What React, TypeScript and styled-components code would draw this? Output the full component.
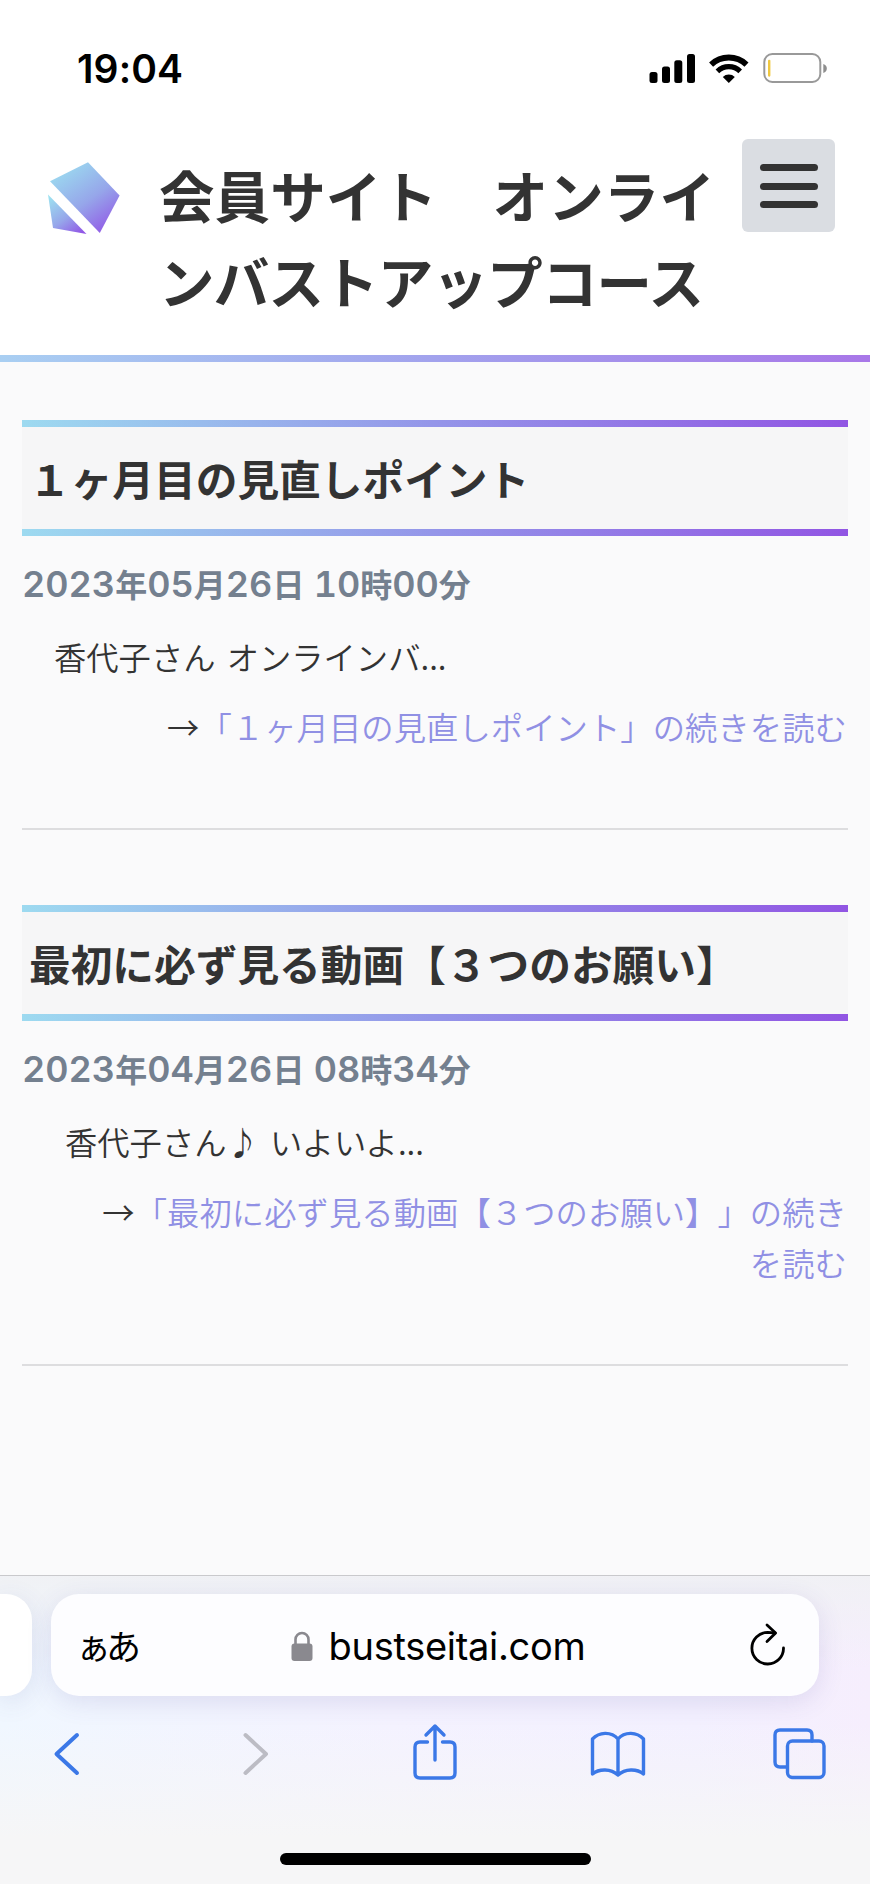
import React from "react";
import styled, { createGlobalStyle } from "styled-components";

const GlobalStyle = createGlobalStyle`
  * { box-sizing: border-box; }
  body { margin: 0; background: #fafafb; }
  h1, h2, p { margin: 0; }
`;

const jp = `"Noto Sans CJK JP", sans-serif`;
const latin = `Inter, "Noto Sans CJK JP", sans-serif`;
const rainbow = "linear-gradient(90deg, #9ddaf0 0%, #9495e9 50%, #9155e3 100%)";

const Screen = styled.div`
  width: 870px;
  height: 1884px;
  display: flex;
  flex-direction: column;
  overflow: hidden;
  background: #fafafb;
  color: #333;
  font-family: ${jp};
  text-spacing-trim: space-all;
`;

const StatusBar = styled.div`
  height: 139px;
  flex: none;
  display: flex;
  justify-content: space-between;
  align-items: flex-start;
  padding: 45px 42px 0 77px;
  background: #fff;
`;

const Clock = styled.div`
  font: 600 39px/48px ${latin};
  color: #000;
  letter-spacing: 0.1px;
`;

const SiteHeader = styled.header`
  height: 216px;
  flex: none;
  display: flex;
  align-items: flex-start;
  background: #fff;
  padding: 0 35px 0 46px;
`;

const LogoMark = styled.svg`
  flex: none;
  margin-top: 21px;
`;

const SiteTitle = styled.h1`
  flex: none;
  width: 583px;
  margin: 12px 0 0 37px;
  font: 700 55.5px/86px ${jp};
  white-space: nowrap;
`;

const TitleLine = styled.span<{ $tracking: number }>`
  display: block;
  letter-spacing: ${(p) => p.$tracking}px;
`;

const MenuButton = styled.button`
  flex: none;
  width: 93px;
  height: 93px;
  border: 0;
  border-radius: 6px;
  background: #dadde2;
  padding: 1px 0 0;
  display: flex;
  flex-direction: column;
  align-items: center;
  justify-content: center;
  gap: 11.5px;
`;

const MenuBar = styled.span`
  width: 58px;
  height: 7px;
  border-radius: 4px;
  background: #333;
`;

const HeaderRule = styled.div`
  height: 7px;
  flex: none;
  background: linear-gradient(90deg, #a9cff2 0%, #a2a2ed 50%, #a877e8 100%);
`;

const Content = styled.main`
  flex: 1;
  padding: 58px 22px 0;
`;

const Article = styled.article`
  border-bottom: 2px solid #dddddf;
  margin-bottom: 75px;
  padding-bottom: 76px;
`;

const Heading = styled.h2`
  height: 116px;
  border: solid transparent;
  border-width: 7px 0;
  border-image: ${rainbow} 1;
  border-image-width: 7px 0;
  background: #f6f6f7;
  padding-left: 7px;
  font: 700 41.7px/103px ${jp};
  white-space: nowrap;
`;

const DateLine = styled.p`
  height: 48px;
  margin-top: 23px;
  font: 700 32px/48px ${jp};
  color: #74808f;
  white-space: nowrap;
  word-spacing: 2px;
`;

const Digits = styled.span`
  font: 600 36px/48px Inter, sans-serif;
  font-feature-settings: "tnum";
`;

const Excerpt = styled.p<{ $indent: number }>`
  height: 51px;
  margin-top: 24px;
  padding-left: ${(p) => p.$indent}px;
  font: 350 32.3px/51px ${jp};
  white-space: nowrap;
  word-spacing: 4px;
`;

const More = styled.p`
  margin-top: 19px;
  padding-right: 1px;
  text-align: right;
  font: 350 32.3px/51px ${jp};
  letter-spacing: 0.08px;
`;

const MoreLink = styled.a`
  color: #9090e4;
`;

const Phrase = styled.span`
  display: inline-block;
  white-space: nowrap;
`;

const BrowserBar = styled.footer`
  height: 309px;
  flex: none;
  border-top: 1px solid #c9c9cc;
  padding-top: 18px;
  background:
    linear-gradient(180deg, rgba(240, 241, 244, 0.9) 0%, rgba(240, 241, 244, 0) 30%),
    linear-gradient(0deg, #f6f6f7 15%, rgba(246, 246, 247, 0) 52%),
    linear-gradient(90deg, #f0f7ff 0%, #f4f2ff 45%, #f3f0ff 80%, #f6eefd 100%);
`;

const TabStrip = styled.div`
  display: flex;
  gap: 19px;
  height: 102px;
`;

const PreviousTab = styled.div`
  width: 32px;
  background: #fff;
  border-radius: 0 26px 26px 0;
  box-shadow: 0 6px 26px rgba(70, 80, 150, 0.13);
`;

const AddressField = styled.div`
  width: 768px;
  display: grid;
  grid-template-columns: 190px 1fr 190px;
  align-items: center;
  padding: 0 33px 0 30px;
  background: #fdfdff;
  border-radius: 28px;
  box-shadow: 0 6px 26px rgba(70, 60, 150, 0.13);
  color: #000;
`;

const PageSettings = styled.span`
  font: 400 35px/48px ${jp};
  letter-spacing: -5px;
  margin-left: -5px;
`;

const Domain = styled.span`
  display: flex;
  align-items: center;
  justify-content: center;
  gap: 16px;
  font: 400 38px/48px ${latin};
  letter-spacing: -0.3px;
  padding: 1px 0 0 9px;
`;

const Reload = styled.svg`
  justify-self: end;
`;

const Toolbar = styled.nav`
  display: flex;
  justify-content: space-between;
  padding: 24px 41px 0;
`;

const HomeIndicator = styled.div`
  width: 311px;
  height: 12px;
  margin: 73px auto 0;
  border-radius: 6px;
  background: #000;
`;

const ToolIcon = ({ children, color = "#3b78e7" }: { children: React.ReactNode; color?: string }) => (
  <svg width="58" height="60" viewBox="0 0 58 60" fill="none" stroke={color} strokeWidth="3.4" strokeLinecap="round" strokeLinejoin="round">
    {children}
  </svg>
);

const DateText = ({ value }: { value: string }) => (
  <DateLine>
    {value.split(/([0-9]+)/).map((part, i) => (/[0-9]/.test(part) ? <Digits key={i}>{part}</Digits> : part))}
  </DateLine>
);

const posts = [
  { title: "１ヶ月目の見直しポイント", date: "2023年05月26日 10時00分", excerpt: "香代子さん オンラインバ...", indent: 32 },
  { title: "最初に必ず見る動画【３つのお願い】", date: "2023年04月26日 08時34分", excerpt: "香代子さん♪ いよいよ...", indent: 43 },
];

export default function App() {
  return (
    <Screen>
      <GlobalStyle />
      <StatusBar>
        <Clock>19:04</Clock>
        <svg width="180" height="40" viewBox="648 45 180 40">
          <rect x="649.5" y="72" width="8" height="11" rx="2.5" />
          <rect x="662" y="66.5" width="8" height="16.5" rx="2.5" />
          <rect x="674.3" y="60.3" width="8" height="22.7" rx="2.5" />
          <rect x="687" y="54" width="8" height="29" rx="2.5" />
          <g fill="none" stroke="#000">
            <path d="M711.1 64.6A25.6 25.6 0 0 1 746.5 64.6" strokeWidth="5.8" />
            <path d="M717.4 71.3A16.4 16.4 0 0 1 740.2 71.3" strokeWidth="5.2" />
          </g>
          <path d="M728.8 83L722.8 77A8.7 8.7 0 0 1 734.8 77Z" />
          <rect x="764.3" y="54" width="56" height="28" rx="8" fill="none" stroke="#999" strokeWidth="2" />
          <rect x="768" y="59.7" width="2.4" height="17" rx="1.1" fill="#f0c840" />
          <path d="M823.3 64C828 65 828 72 823.3 73Z" fill="#8e8e8e" />
        </svg>
      </StatusBar>
      <SiteHeader>
        <LogoMark width="76" height="76" viewBox="46 160 76 76">
          <defs>
            <linearGradient id="facet" x1="0.15" y1="0" x2="0.85" y2="1">
              <stop offset="0" stopColor="#9ce0f0" />
              <stop offset="0.55" stopColor="#96a6ea" />
              <stop offset="1" stopColor="#9155e6" />
            </linearGradient>
          </defs>
          <path d="M88 162.3L119.6 195.5L99.8 233L50 181.3Z" fill="url(#facet)" />
          <path d="M48 194.5L86.5 234L53 228Z" fill="url(#facet)" />
        </LogoMark>
        <SiteTitle>
          <TitleLine $tracking={0.1}>会員サイト　オンライ</TitleLine>
          <TitleLine $tracking={-0.8}>ンバストアップコース</TitleLine>
        </SiteTitle>
        <MenuButton aria-label="メニュー">
          <MenuBar />
          <MenuBar />
          <MenuBar />
        </MenuButton>
      </SiteHeader>
      <HeaderRule />
      <Content>
        {posts.map((post) => (
          <Article key={post.title}>
            <Heading>{post.title}</Heading>
            <DateText value={post.date} />
            <Excerpt $indent={post.indent}>{post.excerpt}</Excerpt>
            <More>
              →<MoreLink>「{post.title}」の続き<Phrase>を読む</Phrase></MoreLink>
            </More>
          </Article>
        ))}
      </Content>
      <BrowserBar>
        <TabStrip>
          <PreviousTab />
          <AddressField>
            <PageSettings>ぁあ</PageSettings>
            <Domain>
              <svg width="22" height="30" viewBox="0 0 22 30">
                <path d="M4.5 14V8.5a6.5 6.5 0 0 1 13 0V14" fill="none" stroke="#8a898f" strokeWidth="2.6" />
                <rect x="0.5" y="12.5" width="21" height="17.5" rx="3" fill="#8a898f" />
              </svg>
              bustseitai.com
            </Domain>
            <Reload width="36" height="44" viewBox="750 1622 36 44" fill="none" stroke="#000" strokeWidth="2.8" strokeLinecap="round" strokeLinejoin="round">
              <path d="M783.5 1647A15.8 15.8 0 1 1 767.7 1631.4L775 1632" />
              <path d="M767 1624L775.6 1632L767 1640.5" />
            </Reload>
          </AddressField>
        </TabStrip>
        <Toolbar>
          <ToolIcon>
            <path d="M36 15L15.5 34L36 53" strokeWidth="4" />
          </ToolIcon>
          <ToolIcon color="#bcbcc4">
            <path d="M21.5 15L42 34L21.5 53" strokeWidth="4" />
          </ToolIcon>
          <ToolIcon>
            <path d="M21.5 22H14Q9 22 9 27V53Q9 58 14 58H44Q49 58 49 53V27Q49 22 44 22H36.5M29 40V6M20 15L29 6L38 15" />
          </ToolIcon>
          <ToolIcon>
            <path d="M29 19C22 11 10 12 3.500 19V54C10 48.500 22 48.500 29 55C36 48.500 48 48.500 54.500 54V19C48 12 36 11 29 19V55" />
          </ToolIcon>
          <ToolIcon>
            <path d="M15 47H9Q4 47 4 42V15Q4 10 9 10H36Q41 10 41 15V21" />
            <rect x="16.500" y="21" width="36.500" height="36.500" rx="5" />
          </ToolIcon>
        </Toolbar>
        <HomeIndicator />
      </BrowserBar>
    </Screen>
  );
}
